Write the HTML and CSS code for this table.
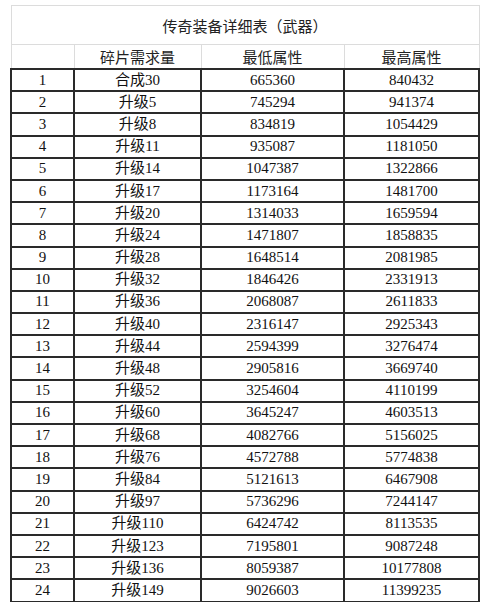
FILE: index.html
```html
<!DOCTYPE html>
<html>
<head>
<meta charset="utf-8">
<link rel="stylesheet" href="styles.css">
</head>
<body>
<table class="sheet">
  <colgroup>
    <col class="c1"><col class="c2"><col class="c3"><col class="c4">
  </colgroup>
  <tr class="title"><td colspan="4">传奇装备详细表（武器）</td></tr>
  <tr class="head"><td></td><td>碎片需求量</td><td>最低属性</td><td>最高属性</td></tr>
  <tr class="row"><td>1</td><td>合成30</td><td>665360</td><td>840432</td></tr>
  <tr class="row"><td>2</td><td>升级5</td><td>745294</td><td>941374</td></tr>
  <tr class="row"><td>3</td><td>升级8</td><td>834819</td><td>1054429</td></tr>
  <tr class="row"><td>4</td><td>升级11</td><td>935087</td><td>1181050</td></tr>
  <tr class="row"><td>5</td><td>升级14</td><td>1047387</td><td>1322866</td></tr>
  <tr class="row"><td>6</td><td>升级17</td><td>1173164</td><td>1481700</td></tr>
  <tr class="row"><td>7</td><td>升级20</td><td>1314033</td><td>1659594</td></tr>
  <tr class="row"><td>8</td><td>升级24</td><td>1471807</td><td>1858835</td></tr>
  <tr class="row"><td>9</td><td>升级28</td><td>1648514</td><td>2081985</td></tr>
  <tr class="row"><td>10</td><td>升级32</td><td>1846426</td><td>2331913</td></tr>
  <tr class="row"><td>11</td><td>升级36</td><td>2068087</td><td>2611833</td></tr>
  <tr class="row"><td>12</td><td>升级40</td><td>2316147</td><td>2925343</td></tr>
  <tr class="row"><td>13</td><td>升级44</td><td>2594399</td><td>3276474</td></tr>
  <tr class="row"><td>14</td><td>升级48</td><td>2905816</td><td>3669740</td></tr>
  <tr class="row"><td>15</td><td>升级52</td><td>3254604</td><td>4110199</td></tr>
  <tr class="row"><td>16</td><td>升级60</td><td>3645247</td><td>4603513</td></tr>
  <tr class="row"><td>17</td><td>升级68</td><td>4082766</td><td>5156025</td></tr>
  <tr class="row"><td>18</td><td>升级76</td><td>4572788</td><td>5774838</td></tr>
  <tr class="row"><td>19</td><td>升级84</td><td>5121613</td><td>6467908</td></tr>
  <tr class="row"><td>20</td><td>升级97</td><td>5736296</td><td>7244147</td></tr>
  <tr class="row"><td>21</td><td>升级110</td><td>6424742</td><td>8113535</td></tr>
  <tr class="row"><td>22</td><td>升级123</td><td>7195801</td><td>9087248</td></tr>
  <tr class="row"><td>23</td><td>升级136</td><td>8059387</td><td>10177808</td></tr>
  <tr class="row"><td>24</td><td>升级149</td><td>9026603</td><td>11399235</td></tr>
</table>
</body>
</html>
```
FILE: styles.css
```css
html, body {
  margin: 0;
  padding: 0;
  background: #ffffff;
}

body {
  padding: 5px 0 0 10px;
}

.sheet {
  border-collapse: collapse;
  table-layout: fixed;
  width: 468px;
  font-family: "Liberation Serif", "Noto Sans CJK SC", serif;
  color: #111;
}

.c1 { width: 63px; }
.c2 { width: 127px; }
.c3 { width: 143px; }
.c4 { width: 135px; }

.sheet td {
  padding: 0;
  text-align: center;
  vertical-align: middle;
  white-space: nowrap;
  line-height: 1;
}

.title td {
  height: 38px;
  border: 1px solid #dcdcdc;
  font-family: "Noto Sans CJK SC", sans-serif;
  font-size: 15px;
  color: #222;
}

.head td {
  height: 23px;
  border: 1px solid #dcdcdc;
  font-family: "Noto Sans CJK SC", sans-serif;
  font-size: 15px;
  color: #222;
}

.row td {
  height: 20.2px;
  border: 2px solid #2a2a2a;
  font-size: 15px;
}
```
